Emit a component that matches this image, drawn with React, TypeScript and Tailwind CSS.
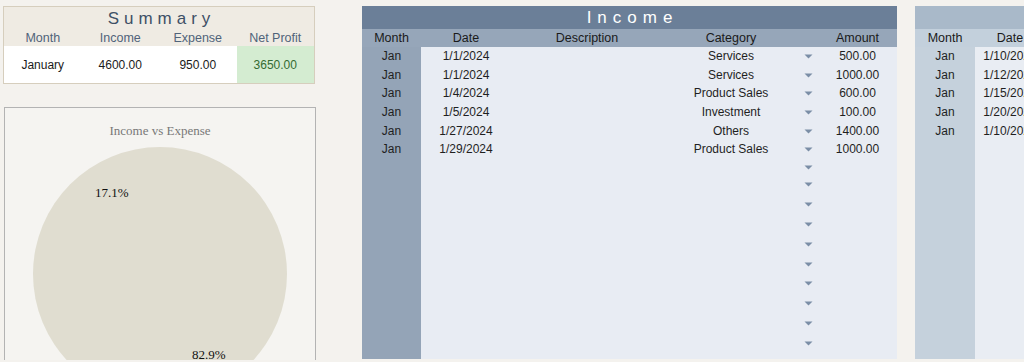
import React from "react";

const sans = { fontFamily: '"Liberation Sans", Arial, sans-serif' };
const serif = { fontFamily: '"Liberation Serif", "Times New Roman", serif' };

const income = [
  ["Jan", "1/1/2024", "", "Services", "500.00"],
  ["Jan", "1/1/2024", "", "Services", "1000.00"],
  ["Jan", "1/4/2024", "", "Product Sales", "600.00"],
  ["Jan", "1/5/2024", "", "Investment", "100.00"],
  ["Jan", "1/27/2024", "", "Others", "1400.00"],
  ["Jan", "1/29/2024", "", "Product Sales", "1000.00"],
];

const expense = [
  ["Jan", "1/10/2024"],
  ["Jan", "1/12/2024"],
  ["Jan", "1/15/2024"],
  ["Jan", "1/20/2024"],
  ["Jan", "1/10/2024"],
];

function Arrow() {
  return (
    <svg width="9" height="5" viewBox="0 0 9 5">
      <path d="M0.5 0.5 H8.5 L4.5 4.5 Z" fill="#7b8ea6" />
    </svg>
  );
}

function IncomeRow({ r, h }: { r?: string[]; h: string }) {
  return (
    <div className={`flex items-center ${h} shrink-0 text-[12px] text-[#1f1f1f]`}>
      <div className="w-[59px] text-center">{r?.[0]}</div>
      <div className="w-[90px] text-center">{r?.[1]}</div>
      <div className="w-[152px] text-center">{r?.[2]}</div>
      <div className="w-[136px] text-center">{r?.[3]}</div>
      <div className="w-[19px] flex justify-center pt-[1px]">
        <Arrow />
      </div>
      <div className="w-[79px] text-center">{r?.[4]}</div>
    </div>
  );
}

export default function App() {
  return (
    <div
      className="w-[1024px] h-[362px] overflow-hidden bg-[#f4f2ee] flex pt-[6px] pl-[3px]"
      style={sans}
    >
      {/* Left column */}
      <div className="w-[312px] flex flex-col shrink-0">
        <div className="border border-[#d6cebd] bg-[#efebe3] h-[78px] flex flex-col">
          <div className="h-[22px] flex items-center justify-center text-[17px] tracking-[5px] text-[#3e5066] pl-[5px] pt-[1px]">
            Summary
          </div>
          <div className="h-[17px] grid grid-cols-4 text-[12.5px] text-[#50637a] items-center">
            <div className="text-center">Month</div>
            <div className="text-center">Income</div>
            <div className="text-center">Expense</div>
            <div className="text-center">Net Profit</div>
          </div>
          <div className="flex-1 grid grid-cols-4 text-[12px] text-[#1a1a1a] bg-white">
            <div className="flex items-center justify-center">January</div>
            <div className="flex items-center justify-center">4600.00</div>
            <div className="flex items-center justify-center">950.00</div>
            <div className="flex items-center justify-center bg-[#d4ecd1] text-[#336b32]">
              3650.00
            </div>
          </div>
        </div>

        <div className="mt-[23px] ml-[1px] w-[312px] h-[253px] border border-[#b3b3b3] border-b-0 bg-[#f5f4f1] overflow-hidden flex flex-col">
          <div
            className="text-center text-[13px] text-[#787878] mt-[15px] h-[16px] leading-[16px] shrink-0"
            style={serif}
          >
            Income vs Expense
          </div>
          <svg width="311" height="230" viewBox="0 0 311 230" className="block shrink-0">
            <circle cx="155" cy="135" r="127" fill="#e0ddd0" />
            <text x="90" y="58" fontSize="13" fill="#111" style={serif}>
              17.1%
            </text>
            <text x="187" y="220" fontSize="13" fill="#111" style={serif}>
              82.9%
            </text>
          </svg>
        </div>
      </div>

      {/* Income table */}
      <div className="ml-[47px] w-[535px] h-[353px] shrink-0 flex flex-col bg-[#e8ecf3]">
        <div className="h-[23px] bg-[#6b7f98] text-white text-[17px] tracking-[6px] flex items-center justify-center pl-[6px]">
          Income
        </div>
        <div className="flex-1 flex relative">
          <div className="w-[59px] bg-[#94a4b7]" />
          <div className="flex-1" />
          <div className="absolute inset-0 flex flex-col overflow-hidden">
            <div className="h-[18px] shrink-0 bg-[#96a6b9] flex items-center text-[12.5px] text-[#1a1a1a]">
              <div className="w-[59px] text-center">Month</div>
              <div className="w-[90px] text-center">Date</div>
              <div className="w-[152px] text-center">Description</div>
              <div className="w-[136px] text-center">Category</div>
              <div className="w-[19px]" />
              <div className="w-[79px] text-center">Amount</div>
            </div>
            {income.map((r, i) => (
              <IncomeRow key={i} r={r} h="h-[18.6px]" />
            ))}
            <IncomeRow h="h-[16px]" />
            {Array.from({ length: 9 }).map((_, i) => (
              <IncomeRow key={"e" + i} h="h-[19.8px]" />
            ))}
          </div>
        </div>
      </div>

      {/* Expense table (cut off) */}
      <div className="ml-[18px] w-[200px] h-[353px] shrink-0 flex flex-col bg-[#e9edf3]">
        <div className="h-[23px] bg-[#a9b9c9]" />
        <div className="flex-1 flex relative">
          <div className="w-[60px] bg-[#c5d1dc]" />
          <div className="flex-1" />
          <div className="absolute inset-0 flex flex-col">
            <div className="h-[18px] shrink-0 bg-[#c3d0dc] flex items-center text-[12.5px] text-[#1a1a1a]">
              <div className="w-[60px] text-center">Month</div>
              <div className="w-[70px] text-center">Date</div>
            </div>
            {expense.map((r, i) => (
              <div key={i} className="h-[18.6px] shrink-0 flex items-center text-[12px] text-[#1f1f1f]">
                <div className="w-[60px] text-center">{r[0]}</div>
                <div className="w-[70px] text-center whitespace-nowrap">{r[1]}</div>
              </div>
            ))}
          </div>
        </div>
      </div>
    </div>
  );
}
